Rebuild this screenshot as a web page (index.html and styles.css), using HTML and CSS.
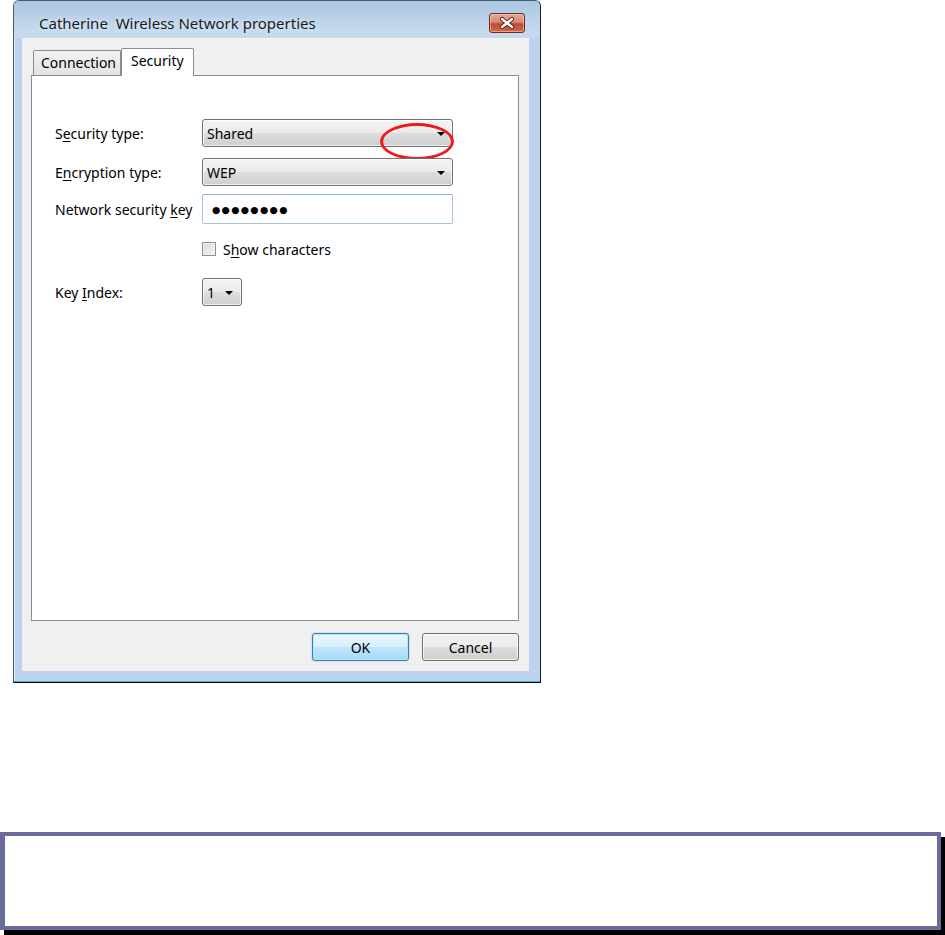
FILE: index.html
```html
<!DOCTYPE html>
<html>
<head>
<meta charset="utf-8">
<title>Catherine Wireless Network properties</title>
<link rel="stylesheet" href="styles.css">
</head>
<body>
<div class="window">
  <div class="titlebar">
    <span class="title">Catherine&nbsp; Wireless Network properties</span>
    <div class="close">
      <svg width="16" height="12" viewBox="0 0 16 12">
        <path d="M3 2 L13 10 M13 2 L3 10" stroke="#5a2018" stroke-width="4.2" stroke-linecap="round"/>
        <path d="M3 2 L13 10 M13 2 L3 10" stroke="#ffffff" stroke-width="2.4" stroke-linecap="round"/>
      </svg>
    </div>
  </div>
  <div class="client">
    <div class="tabs">
      <div class="tab">Connection</div>
      <div class="tab active">Security</div>
    </div>
    <div class="panel">
      <div class="row r1">
        <div class="label">S<u>e</u>curity type:</div>
        <div class="combo wide">
          <span class="value">Shared</span>
          <span class="arrow"></span>
          <span class="ring"></span>
        </div>
      </div>
      <div class="row r2">
        <div class="label">E<u>n</u>cryption type:</div>
        <div class="combo wide">
          <span class="value">WEP</span>
          <span class="arrow"></span>
        </div>
      </div>
      <div class="row r3">
        <div class="label">Network security <u>k</u>ey</div>
        <div class="input"><span class="dots">●●●●●●●●</span></div>
      </div>
      <div class="row r4">
        <div class="label"></div>
        <div class="check"><span class="box"></span><span>S<u>h</u>ow characters</span></div>
      </div>
      <div class="row r5">
        <div class="label">Key <u>I</u>ndex:</div>
        <div class="combo small">
          <span class="value">1</span>
          <span class="arrow"></span>
        </div>
      </div>
    </div>
    <div class="buttons">
      <div class="btn default">OK</div>
      <div class="btn">Cancel</div>
    </div>
  </div>
</div>
<div class="note"></div>
</body>
</html>
```
FILE: styles.css
```css
* { box-sizing: border-box; }
html, body { margin: 0; padding: 0; background: #ffffff; }
body {
  font-family: "Noto Sans", "Open Sans", sans-serif;
  font-size: 14px;
  color: #000;
  width: 945px;
  height: 935px;
  overflow: hidden;
}
.window {
  margin-left: 13px;
  width: 528px;
  height: 683px;
  background: #bcd3eb;
  border: 1px solid #4b5a6a;
  border-right-color: #1b1b1b;
  border-bottom-color: #000;
  border-radius: 6px 6px 0 0;
  box-shadow: inset 0 -1px 0 #3fb6cf, inset 1px 1px 0 #e4eef8;
  display: flex;
  flex-direction: column;
}
.titlebar {
  height: 37px;
  padding: 7px 15px 0 25px;
  display: flex;
  align-items: center;
  justify-content: space-between;
  background: linear-gradient(#a9c5e2, #c3d8ee 70%, #c6daef);
  border-radius: 5px 5px 0 0;
}
.title {
  font-size: 15px;
  color: #1a1a1a;
  text-shadow: 0 0 6px rgba(255,255,255,0.8);
}
.close {
  width: 36px;
  height: 20px;
  border: 1px solid #6e2b22;
  border-radius: 3px;
  background: linear-gradient(#e7a796 0%, #d98a76 45%, #c4482f 55%, #cf6a4c 100%);
  box-shadow: inset 0 0 0 1px rgba(255,220,210,0.5);
  display: flex;
  align-items: center;
  justify-content: center;
}
.client {
  margin: 0 11px 0 8px;
  height: 633px;
  background: #f0f0f0;
  padding: 10px 10px 10px 9px;
  display: flex;
  flex-direction: column;
}
.tabs {
  display: flex;
  align-items: flex-end;
  padding-left: 2px;
  height: 27px;
  position: relative;
  z-index: 1;
}
.tab {
  height: 25px;
  padding: 1px 4px 0 7px;
  border: 1px solid #898c95;
  border-bottom: none;
  border-radius: 2px 2px 0 0;
  background: linear-gradient(#f2f2f2, #e3e3e3);
  line-height: 21px;
}
.tab.active {
  height: 28px;
  margin-bottom: -1px;
  padding: 1px 9px 0 9px;
  background: #ffffff;
}
.panel {
  height: 546px;
  background: #ffffff;
  border: 1px solid #898c95;
  padding: 43px 0 0 23px;
}
.row {
  display: flex;
  align-items: center;
}
.r2 { margin-top: 11px; }
.r3 { margin-top: 8px; }
.r4 { margin-top: 16px; height: 18px; }
.r5 { margin-top: 20px; }
.label {
  width: 147px;
  flex: none;
}
u { text-decoration-thickness: 1px; text-underline-offset: 2px; }
.combo {
  position: relative;
  height: 28px;
  border: 1px solid #707070;
  border-radius: 3px;
  background: linear-gradient(#f3f3f3 0%, #ebebeb 48%, #dddddd 52%, #cfcfcf 100%);
  box-shadow: inset 0 0 0 1px rgba(255,255,255,0.7);
  display: flex;
  align-items: center;
  justify-content: space-between;
  padding: 0 7px 0 4px;
}
.combo.wide { width: 251px; }
.combo.small { width: 40px; padding-right: 8px; }
.arrow {
  width: 0;
  height: 0;
  border-left: 4px solid transparent;
  border-right: 4px solid transparent;
  border-top: 4px solid #000;
  margin-top: 1px;
}
.ring {
  position: absolute;
  left: 177px;
  top: 3px;
  width: 74px;
  height: 37px;
  border: 3px solid #ec1a1a;
  border-radius: 50%;
}
.input {
  width: 251px;
  height: 30px;
  border: 1px solid #a6c1de;
  border-top-color: #8eaed2;
  border-radius: 2px;
  background: #fff;
  padding-left: 9px;
  display: flex;
  align-items: center;
}
.dots {
  font-family: "DejaVu Sans", sans-serif;
  font-size: 9.5px;
  letter-spacing: 1.3px;
}
.check {
  display: flex;
  align-items: center;
  gap: 7px;
}
.box {
  width: 14px;
  height: 14px;
  border: 1px solid #8f8f8f;
  background: linear-gradient(135deg, #d8d8d8, #f6f6f6);
  box-shadow: inset 0 0 0 1px #f4f4f4;
}
.buttons {
  margin-top: 12px;
  display: flex;
  justify-content: flex-end;
  gap: 13px;
}
.btn {
  width: 97px;
  height: 28px;
  border: 1px solid #707070;
  border-radius: 3px;
  background: linear-gradient(#f2f2f2 0%, #ebebeb 48%, #dddddd 52%, #cfcfcf 100%);
  box-shadow: inset 0 0 0 1px rgba(255,255,255,0.75);
  display: flex;
  align-items: center;
  justify-content: center;
}
.btn.default {
  border-color: #3c7fb1;
  background: linear-gradient(#eaf6fd 0%, #d9f0fc 48%, #bee6fd 52%, #a7d9f5 100%);
  box-shadow: inset 0 0 0 1px #b6e5fa, 0 0 2px rgba(60,127,177,0.5);
}
.note {
  margin-top: 149px;
  width: 941px;
  height: 98px;
  border: 4px solid #6a6a9d;
  border-left-width: 5px;
  background: #fff;
  box-shadow: 4px 5px 0 #000;
}
```
